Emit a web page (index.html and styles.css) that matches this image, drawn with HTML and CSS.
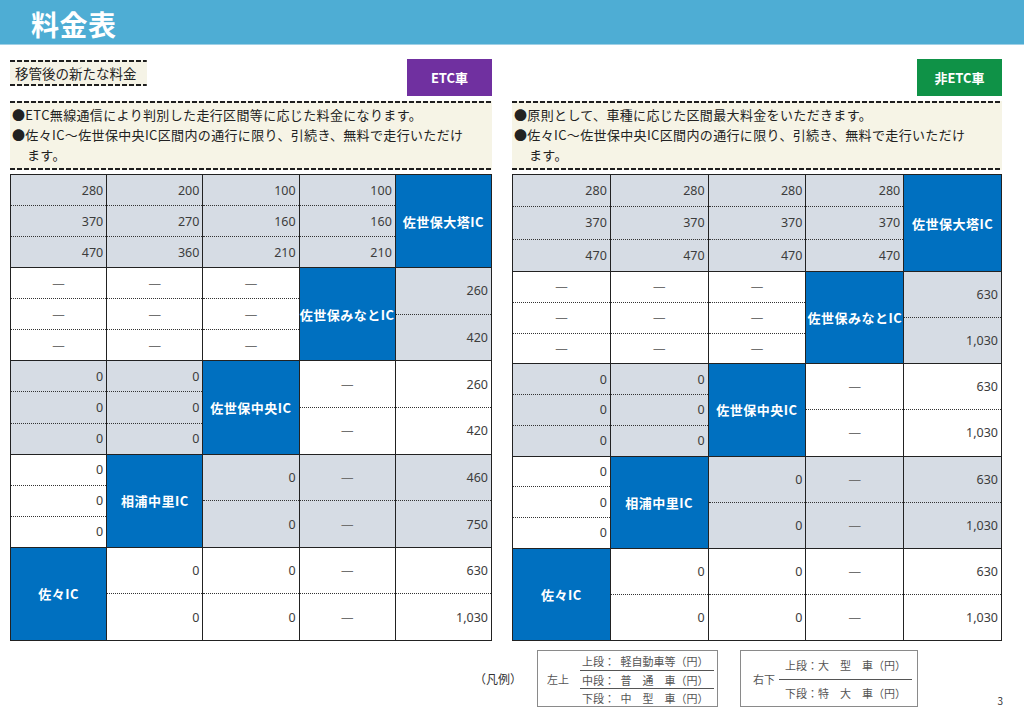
FILE: index.html
```html
<!DOCTYPE html>
<html lang="ja">
<head>
<meta charset="utf-8">
<title>料金表</title>
<link rel="stylesheet" href="styles.css">
</head>
<body>
<header class="titlebar"><h1 class="title">料金表</h1></header>
<main class="columns">
  <section class="panel">
    <div class="panel-top">
      <div class="tag">移管後の新たな料金</div>
      <div class="badge etc">ETC車</div>
    </div>
    <div class="notes">
      <p class="note">●ETC無線通信により判別した走行区間等に応じた料金になります。</p>
      <p class="note">●佐々IC～佐世保中央IC区間内の通行に限り、引続き、無料で走行いただけ<br>ます。</p>
    </div>
    <div class="fare-grid">
      <div class="cell g c3"><span>280</span><span>370</span><span>470</span></div>
      <div class="cell g c3"><span>200</span><span>270</span><span>360</span></div>
      <div class="cell g c3"><span>100</span><span>160</span><span>210</span></div>
      <div class="cell g c3"><span>100</span><span>160</span><span>210</span></div>
      <div class="cell ic">佐世保大塔IC</div>

      <div class="cell w c3 dash"><span>—</span><span>—</span><span>—</span></div>
      <div class="cell w c3 dash"><span>—</span><span>—</span><span>—</span></div>
      <div class="cell w c3 dash"><span>—</span><span>—</span><span>—</span></div>
      <div class="cell ic">佐世保みなとIC</div>
      <div class="cell g c2"><span>260</span><span>420</span></div>

      <div class="cell g c3"><span>0</span><span>0</span><span>0</span></div>
      <div class="cell g c3"><span>0</span><span>0</span><span>0</span></div>
      <div class="cell ic">佐世保中央IC</div>
      <div class="cell w c2 dash"><span>—</span><span>—</span></div>
      <div class="cell w c2"><span>260</span><span>420</span></div>

      <div class="cell w c3"><span>0</span><span>0</span><span>0</span></div>
      <div class="cell ic">相浦中里IC</div>
      <div class="cell g c2"><span>0</span><span>0</span></div>
      <div class="cell g c2 dash"><span>—</span><span>—</span></div>
      <div class="cell g c2"><span>460</span><span>750</span></div>

      <div class="cell ic">佐々IC</div>
      <div class="cell w c2"><span>0</span><span>0</span></div>
      <div class="cell w c2"><span>0</span><span>0</span></div>
      <div class="cell w c2 dash"><span>—</span><span>—</span></div>
      <div class="cell w c2"><span>630</span><span>1,030</span></div>
    </div>
  </section>

  <section class="panel">
    <div class="panel-top end">
      <div class="badge nonetc">非ETC車</div>
    </div>
    <div class="notes">
      <p class="note">●原則として、車種に応じた区間最大料金をいただきます。</p>
      <p class="note">●佐々IC～佐世保中央IC区間内の通行に限り、引続き、無料で走行いただけ<br>ます。</p>
    </div>
    <div class="fare-grid tall-first">
      <div class="cell g c3"><span>280</span><span>370</span><span>470</span></div>
      <div class="cell g c3"><span>280</span><span>370</span><span>470</span></div>
      <div class="cell g c3"><span>280</span><span>370</span><span>470</span></div>
      <div class="cell g c3"><span>280</span><span>370</span><span>470</span></div>
      <div class="cell ic">佐世保大塔IC</div>

      <div class="cell w c3 dash"><span>—</span><span>—</span><span>—</span></div>
      <div class="cell w c3 dash"><span>—</span><span>—</span><span>—</span></div>
      <div class="cell w c3 dash"><span>—</span><span>—</span><span>—</span></div>
      <div class="cell ic">佐世保みなとIC</div>
      <div class="cell g c2"><span>630</span><span>1,030</span></div>

      <div class="cell g c3"><span>0</span><span>0</span><span>0</span></div>
      <div class="cell g c3"><span>0</span><span>0</span><span>0</span></div>
      <div class="cell ic">佐世保中央IC</div>
      <div class="cell w c2 dash"><span>—</span><span>—</span></div>
      <div class="cell w c2"><span>630</span><span>1,030</span></div>

      <div class="cell w c3"><span>0</span><span>0</span><span>0</span></div>
      <div class="cell ic">相浦中里IC</div>
      <div class="cell g c2"><span>0</span><span>0</span></div>
      <div class="cell g c2 dash"><span>—</span><span>—</span></div>
      <div class="cell g c2"><span>630</span><span>1,030</span></div>

      <div class="cell ic">佐々IC</div>
      <div class="cell w c2"><span>0</span><span>0</span></div>
      <div class="cell w c2"><span>0</span><span>0</span></div>
      <div class="cell w c2 dash"><span>—</span><span>—</span></div>
      <div class="cell w c2"><span>630</span><span>1,030</span></div>
    </div>
  </section>
</main>
<footer class="legend">
  <div class="legend-title">（凡例）</div>
  <div class="legend-box">
    <div class="legend-label">左上</div>
    <div class="legend-stack three">
      <div class="legend-line">上段：&ensp;軽自動車等（円）</div>
      <div class="legend-line">中段：&ensp;普&ensp;&ensp;通&ensp;&ensp;車（円）</div>
      <div class="legend-line">下段：&ensp;中&ensp;&ensp;型&ensp;&ensp;車（円）</div>
    </div>
  </div>
  <div class="legend-box two-box">
    <div class="legend-label">右下</div>
    <div class="legend-stack two">
      <div class="legend-line">上段：大&ensp;&ensp;型&ensp;&ensp;車（円）</div>
      <div class="legend-line">下段：特&ensp;&ensp;大&ensp;&ensp;車（円）</div>
    </div>
  </div>
  <div class="page-no">3</div>
</footer>
</body>
</html>
```

FILE: styles.css
```css
* { box-sizing: border-box; }

html, body {
  margin: 0;
  padding: 0;
  background: #ffffff;
}

body {
  width: 1024px;
  height: 709px;
  overflow: hidden;
  font-family: "Noto Sans CJK JP", "Noto Sans", sans-serif;
  color: #222;
}

.titlebar {
  height: 45px;
  background: #4eadd4;
  border-bottom: 1px solid #9fd0e6;
  display: flex;
  align-items: center;
  padding-left: 31px;
}

.title {
  margin: 0;
  font-size: 28px;
  font-weight: 700;
  color: #ffffff;
  line-height: 1;
  padding-top: 4px;
  letter-spacing: 0.5px;
}

.columns {
  display: grid;
  grid-template-columns: 482px 490px;
  column-gap: 20px;
  padding-left: 10px;
  margin-top: 14px;
}

.panel {
  display: flex;
  flex-direction: column;
}

.panel-top {
  height: 37px;
  display: flex;
  align-items: flex-start;
  justify-content: space-between;
}

.panel-top.end { justify-content: flex-end; }

.tag {
  margin-top: 1px;
  height: 26px;
  padding: 2px 10px 0 5px;
  font-size: 13.5px;
  line-height: 22px;
  color: #222;
  background:
    repeating-linear-gradient(90deg, #1e1e1e 0 5px, transparent 5px 7px) top / 100% 2px no-repeat,
    repeating-linear-gradient(90deg, #1e1e1e 0 5px, transparent 5px 7px) bottom / 100% 2px no-repeat,
    #f5f3e6;
}

.badge {
  width: 85px;
  height: 37px;
  display: flex;
  align-items: center;
  justify-content: center;
  color: #ffffff;
  font-family: "Noto Sans CJK JP", "Noto Sans", sans-serif;
  font-weight: 700;
  font-size: 13px;
}

.badge.etc { background: #7030a0; }
.badge.nonetc { background: #0f9247; }

.notes {
  margin-top: 5px;
  height: 69px;
  padding: 4px 0 0 2px;
  background:
    repeating-linear-gradient(90deg, #1e1e1e 0 5px, transparent 5px 7px) top / 100% 2px no-repeat,
    repeating-linear-gradient(90deg, #1e1e1e 0 5px, transparent 5px 7px) bottom / 100% 2px no-repeat,
    #f6f4e6;
}

.note {
  margin: 0;
  font-size: 13px;
  line-height: 20px;
  letter-spacing: 0.35px;
  color: #222;
  padding-left: 15px;
  text-indent: -15px;
}

.fare-grid {
  margin-top: 4px;
  height: 467px;
  display: grid;
  grid-template-columns: repeat(5, 1fr);
  grid-template-rows: repeat(5, 1fr);
  gap: 1px;
  background: #222222;
  border: 1px solid #222222;
}

.fare-grid.tall-first {
  grid-template-rows: 96px repeat(4, 1fr);
}

.cell {
  font-family: "Noto Sans", "Noto Sans CJK JP", sans-serif;
  font-size: 12.5px;
  color: #3c3c3c;
}

.cell.g { background: #d6dce4; }
.cell.w { background: #ffffff; }

.c3, .c2 {
  display: flex;
  flex-direction: column;
}

.c3 > span, .c2 > span {
  flex: 1;
  display: flex;
  align-items: center;
  justify-content: flex-end;
  padding-right: 3px;
}

.c3 > span + span, .c2 > span + span {
  border-top: 1px dotted #333333;
}

.dash > span {
  justify-content: center;
  padding-right: 0;
  color: #707070;
}

.ic {
  background: #0070c0;
  color: #ffffff;
  font-family: "Noto Sans CJK JP", "Noto Sans", sans-serif;
  font-weight: 700;
  font-size: 13px;
  letter-spacing: 0.5px;
  display: flex;
  align-items: center;
  justify-content: center;
  white-space: nowrap;
}

.legend {
  display: flex;
  align-items: center;
  margin-top: 9px;
  padding-left: 474px;
  height: 57px;
  color: #555;
}

.legend-title {
  font-size: 12px;
  color: #333;
  width: 63px;
}

.legend-box {
  width: 181px;
  height: 57px;
  border: 1px solid #8a8a8a;
  display: flex;
  align-items: center;
  padding-left: 9px;
  font-size: 11px;
  color: #555;
}

.legend-box.two-box {
  width: 178px;
  margin-left: 22px;
  padding-left: 12px;
}

.legend-label {
  width: 33px;
}

.two-box .legend-label {
  width: 26px;
}

.legend-stack {
  flex: 1;
  margin-right: 3px;
  display: flex;
  flex-direction: column;
}

.legend-stack.three .legend-line {
  height: 18px;
  line-height: 18px;
  padding-left: 2px;
}

.legend-stack.three .legend-line + .legend-line {
  border-top: 1.5px solid #555;
}

.legend-stack.two {
  margin-right: 5px;
}

.legend-stack.two .legend-line {
  height: 27px;
  line-height: 27px;
  padding-left: 6px;
}

.legend-stack.two .legend-line + .legend-line {
  border-top: 1.5px solid #555;
}

.page-no {
  margin-left: auto;
  align-self: flex-end;
  font-size: 10px;
  color: #333;
  padding-right: 21px;
  line-height: 12px;
}
```
